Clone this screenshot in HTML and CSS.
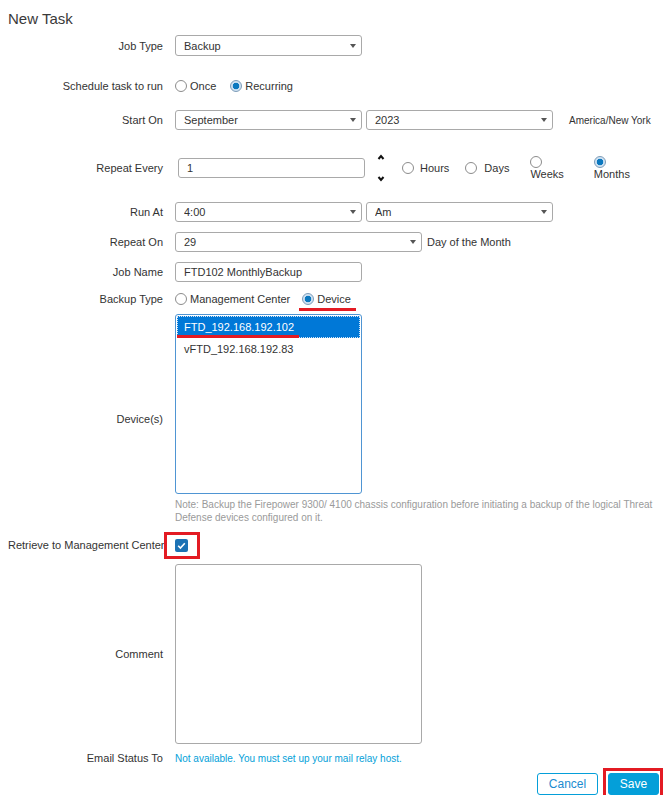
FILE: index.html
```html
<!DOCTYPE html>
<html lang="en">
  <head>
    <meta charset="UTF-8" />
    <title>New Task</title>
    <link rel="stylesheet" href="styles.css">
  </head>
  <body>
    <div class="task">
      <h2 class="task-title">New Task</h2>

      <div class="row row-job-type">
        <div class="row-label">Job Type</div>
        <div class="row-field">
          <span class="select-wrap w187">
            <select class="select select-tall"><option>Backup</option></select>
          </span>
        </div>
      </div>

      <div class="row row-schedule">
        <div class="row-label">Schedule task to run</div>
        <div class="row-field">
          <label class="choice choice-once"><input type="radio" name="run" class="radio" />Once</label>
          <label class="choice choice-recurring"><input type="radio" name="run" class="radio" checked />Recurring</label>
        </div>
      </div>

      <div class="row row-start">
        <div class="row-label">Start On</div>
        <div class="row-field">
          <span class="select-wrap w187">
            <select class="select"><option>September</option></select>
          </span>
          <span class="select-wrap w187 select-next">
            <select class="select"><option>2023</option></select>
          </span>
          <span class="timezone">America/New York</span>
        </div>
      </div>

      <div class="row row-repeat">
        <div class="row-label">Repeat Every</div>
        <div class="row-field">
          <input type="text" class="text-input input-repeat" value="1" />
          <div class="spinner">
            <svg width="8" height="6" viewBox="0 0 8 6"><polyline points="1.5,5 4,2 6.5,5" fill="none" stroke="#111" stroke-width="2"/></svg>
            <svg width="8" height="6" viewBox="0 0 8 6"><polyline points="1.5,1 4,4 6.5,1" fill="none" stroke="#111" stroke-width="2"/></svg>
          </div>
          <label class="choice choice-hours"><input type="radio" name="unit" class="radio" />Hours</label>
          <label class="choice choice-days"><input type="radio" name="unit" class="radio" />Days</label>
          <label class="choice-stack choice-weeks"><input type="radio" name="unit" class="radio" /><span>Weeks</span></label>
          <label class="choice-stack choice-months"><input type="radio" name="unit" class="radio" checked /><span>Months</span></label>
        </div>
      </div>

      <div class="row row-run-at">
        <div class="row-label">Run At</div>
        <div class="row-field">
          <span class="select-wrap w187">
            <select class="select"><option>4:00</option></select>
          </span>
          <span class="select-wrap w187 select-next">
            <select class="select"><option>Am</option></select>
          </span>
        </div>
      </div>

      <div class="row row-repeat-on">
        <div class="row-label">Repeat On</div>
        <div class="row-field">
          <span class="select-wrap w247">
            <select class="select"><option>29</option></select>
          </span>
          <span class="day-hint">Day of the Month</span>
        </div>
      </div>

      <div class="row row-job-name">
        <div class="row-label">Job Name</div>
        <div class="row-field">
          <input type="text" class="text-input w187" value="FTD102 MonthlyBackup" />
        </div>
      </div>

      <div class="row row-backup-type">
        <div class="row-label">Backup Type</div>
        <div class="row-field">
          <label class="choice choice-fmc"><input type="radio" name="btype" class="radio" />Management Center</label>
          <label class="choice choice-device"><input type="radio" name="btype" class="radio" checked />Device</label>
        </div>
      </div>

      <div class="row row-devices">
        <div class="row-label">Device(s)</div>
        <div class="row-field field-column">
          <div class="listbox">
            <div class="list-item is-selected"><span class="marked">FTD_192.168.192.102</span></div>
            <div class="list-item">vFTD_192.168.192.83</div>
          </div>
          <div class="note">
            Note: Backup the Firepower 9300/ 4100 chassis configuration before initiating a backup of the logical Threat<br>
            Defense devices configured on it.
          </div>
        </div>
      </div>

      <div class="row row-retrieve">
        <div class="row-label">Retrieve to Management Center</div>
        <div class="row-field">
          <span class="checkbox">
            <svg width="13" height="13" viewBox="0 0 13 13"><polyline points="3.2,6.8 5.4,9 9.8,4.3" fill="none" stroke="#fff" stroke-width="1.6"/></svg>
          </span>
        </div>
      </div>

      <div class="row row-comment">
        <div class="row-label">Comment</div>
        <div class="row-field">
          <textarea class="comment-box"></textarea>
        </div>
      </div>

      <div class="row row-email">
        <div class="row-label">Email Status To</div>
        <div class="row-field">
          <a href="#" class="mail-link">Not available. You must set up your mail relay host.</a>
        </div>
      </div>

      <div class="actions">
        <button class="btn btn-cancel">Cancel</button>
        <button class="btn btn-save">Save</button>
      </div>
    </div>
  </body>
</html>
```

FILE: styles.css
```css
body {
  margin: 0;
  font-family: "Liberation Sans", Arial, sans-serif;
  font-size: 11px;
  color: #333;
  background-color: #ffffff;
}
.task {
  padding: 9px 9px 0 8px;
}
.task-title {
  margin: 0;
  font-size: 15px;
  font-weight: normal;
  line-height: 20px;
  color: #3a3a3a;
}
.row {
  display: flex;
  align-items: center;
}
.row-label {
  flex: none;
  width: 155px;
  margin-right: 12px;
  text-align: right;
  white-space: nowrap;
}
.row-field {
  display: flex;
  align-items: center;
}
.field-column {
  flex-direction: column;
  align-items: flex-start;
}

/* row spacing */
.row-job-type { margin-top: 6px; height: 21px; }
.row-schedule { margin-top: 20px; height: 20px; }
.row-start { margin-top: 14px; height: 20px; }
.row-repeat { margin-top: 23px; height: 30px; }
.row-run-at { margin-top: 19px; height: 20px; }
.row-repeat-on { margin-top: 10px; height: 20px; }
.row-job-name { margin-top: 10px; height: 20px; }
.row-backup-type { margin-top: 10px; height: 14px; }
.row-devices { margin-top: 8px; }
.row-retrieve { margin-top: 8px; height: 26px; }
.row-comment { margin-top: 6px; }
.row-email { margin-top: 7px; height: 14px; }

/* selects */
.select-wrap {
  position: relative;
  display: inline-block;
}
.select-wrap::after {
  content: "";
  position: absolute;
  right: 6px;
  top: 50%;
  margin-top: -2px;
  border-left: 3.5px solid transparent;
  border-right: 3.5px solid transparent;
  border-top: 4px solid #555;
  pointer-events: none;
}
.select {
  appearance: none;
  -webkit-appearance: none;
  box-sizing: border-box;
  width: 100%;
  height: 20px;
  margin: 0;
  padding: 0 20px 0 8px;
  border: 1px solid #a9a9a9;
  border-radius: 3px;
  background-color: #fff;
  font-family: inherit;
  font-size: 11px;
  color: #333;
}
.select-tall {
  height: 21px;
}
.w187 { width: 187px; }
.w247 { width: 247px; }
.select-next {
  margin-left: 4px;
}
.timezone {
  margin-left: 16px;
  font-size: 10px;
}
.day-hint {
  margin-left: 5px;
}

/* text inputs */
.text-input {
  box-sizing: border-box;
  height: 20px;
  margin: 0;
  padding: 0 8px;
  border: 1px solid #a9a9a9;
  border-radius: 3px;
  font-family: inherit;
  font-size: 11px;
  color: #333;
}
.input-repeat {
  width: 187px;
  margin-left: 3px;
}
.spinner {
  display: flex;
  flex-direction: column;
  justify-content: space-between;
  height: 28px;
  margin-left: 12px;
}

/* radios */
.radio {
  appearance: none;
  -webkit-appearance: none;
  box-sizing: border-box;
  flex: none;
  width: 12px;
  height: 12px;
  margin: 0;
  border: 1px solid #8c8c8c;
  border-radius: 50%;
  background-color: #fff;
}
.radio:checked {
  border-color: #7d9cb8;
  background: radial-gradient(circle, #0b78bf 0, #0b78bf 3px, #cfe2f3 3.6px);
}
.choice {
  position: relative;
  display: inline-flex;
  align-items: center;
  line-height: 13px;
}
.choice .radio {
  margin-right: 3px;
}
.choice-recurring { margin-left: 14px; }
.choice-device { margin-left: 12px; }
.choice-device::after {
  content: "";
  position: absolute;
  left: -3px;
  right: -5px;
  top: 15px;
  height: 3px;
  background-color: #e31b23;
}
.choice-hours { margin-left: 17px; }
.choice-hours .radio { margin-right: 6px; }
.choice-days { margin-left: 16px; }
.choice-days .radio { margin-right: 7px; }
.choice-stack {
  display: flex;
  flex-direction: column;
  align-items: flex-start;
  line-height: 13px;
}
.choice-weeks { margin-left: 21px; }
.choice-months { margin-left: 30px; }

/* device list */
.listbox {
  box-sizing: border-box;
  width: 187px;
  height: 180px;
  padding: 1px;
  border: 1px solid #4f95d3;
  border-radius: 3px;
}
.list-item {
  box-sizing: border-box;
  height: 22px;
  padding-left: 6px;
  line-height: 20px;
  font-size: 11px;
  border: 1px solid transparent;
}
.list-item.is-selected {
  background-color: #0078d7;
  color: #fff;
  border: 1px dotted #cfe3f7;
}
.marked {
  position: relative;
  display: inline-block;
}
.marked::after {
  content: "";
  position: absolute;
  left: -7px;
  right: -5px;
  bottom: -1px;
  height: 3px;
  background-color: #e31b23;
}
.note {
  margin-top: 4px;
  font-size: 10px;
  line-height: 13px;
  color: #9a9a9a;
  white-space: nowrap;
}

/* retrieve checkbox */
.checkbox {
  position: relative;
  display: inline-block;
  width: 13px;
  height: 13px;
  border-radius: 2px;
  background-color: #1c72b4;
}
.checkbox svg {
  display: block;
}
.checkbox::after {
  content: "";
  position: absolute;
  left: -11px;
  top: -7px;
  width: 36px;
  height: 27px;
  box-sizing: border-box;
  border: 3px solid #e31b23;
}

.comment-box {
  box-sizing: border-box;
  width: 247px;
  height: 180px;
  margin: 0;
  border: 1px solid #a9a9a9;
  border-radius: 3px;
  resize: none;
  font-family: inherit;
}

.mail-link {
  font-size: 10px;
  color: #049fd9;
  text-decoration: none;
}

/* buttons */
.actions {
  display: flex;
  justify-content: flex-end;
  gap: 10px;
  margin-top: 8px;
}
.btn {
  box-sizing: border-box;
  height: 22px;
  border-radius: 3px;
  font-family: inherit;
  font-size: 12px;
  cursor: pointer;
}
.btn-cancel {
  width: 61px;
  border: 1px solid #049fd9;
  background-color: #fff;
  color: #1a8bd0;
}
.btn-save {
  position: relative;
  width: 51px;
  border: 1px solid #049fd9;
  background-color: #049fd9;
  color: #fff;
}
.btn-save::after {
  content: "";
  position: absolute;
  left: -6px;
  right: -5px;
  top: -6px;
  bottom: -6px;
  border: 3px solid #e31b23;
}
```
